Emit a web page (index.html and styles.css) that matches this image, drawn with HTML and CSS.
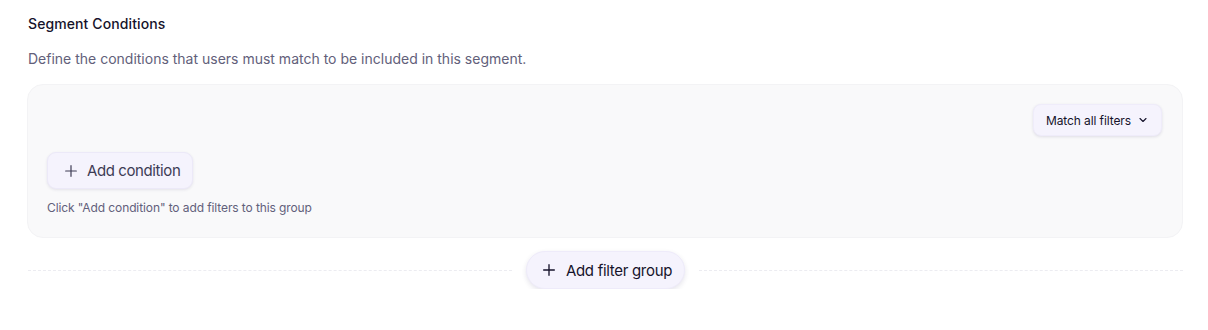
FILE: index.html
```html
<!DOCTYPE html>
<html lang="en">
<head>
    <meta charset="UTF-8">
    <meta name="viewport" content="width=device-width, initial-scale=1.0">
    <title>Segment Conditions</title>
    <link rel="stylesheet" href="styles.css">
</head>
<body>
    <section class="segment">
        <h2 class="segment-title">Segment Conditions</h2>
        <p class="segment-desc">Define the conditions that users must match to be included in this segment.</p>

        <div class="filter-group">
            <div class="group-head">
                <button class="match-btn">
                    Match all filters
                    <svg width="12" height="12" viewBox="0 0 24 24" fill="none" stroke="currentColor" stroke-width="2.2" stroke-linecap="round" stroke-linejoin="round"><path d="M6 9l6 6 6-6"/></svg>
                </button>
            </div>
            <button class="add-btn">
                <svg width="16" height="16" viewBox="0 0 24 24" fill="none" stroke="currentColor" stroke-width="1.8" stroke-linecap="round"><path d="M12 4v16M4 12h16"/></svg>
                Add condition
            </button>
            <p class="group-hint">Click "Add condition" to add filters to this group</p>
        </div>

        <div class="group-divider">
            <button class="add-group-btn">
                <svg width="16" height="16" viewBox="0 0 24 24" fill="none" stroke="currentColor" stroke-width="2" stroke-linecap="round"><path d="M12 4v16M4 12h16"/></svg>
                Add filter group
            </button>
        </div>
    </section>
</body>
</html>
```

FILE: styles.css
```css
:root {
    --ink: #16132b;
    --muted: #62607a;
    --lavender: #f5f3fd;
    --line: #ececf1;
}

* {
    margin: 0;
    padding: 0;
    box-sizing: border-box;
}

body {
    font-family: Inter, 'Noto Sans', sans-serif;
    background: #fff;
    color: var(--ink);
}

.segment {
    padding: 14px 25px 0 28px;
}

.segment-title {
    font-size: 14px;
    font-weight: 500;
    line-height: 20px;
    letter-spacing: 0.1px;
}

.segment-desc {
    margin-top: 15px;
    font-size: 14px;
    line-height: 20px;
    color: var(--muted);
}

.filter-group {
    margin: 15px 0 0 -1px;
    background: #f9f9fa;
    border: 1px solid #f3f3f5;
    border-radius: 16px;
    padding: 19px 20px 21px 19px;
}

.group-head {
    display: flex;
    justify-content: flex-end;
}

.match-btn {
    display: inline-flex;
    align-items: center;
    gap: 6px;
    height: 32px;
    padding: 0 12px;
    font-family: inherit;
    font-size: 12px;
    letter-spacing: -0.1px;
    color: var(--ink);
    background: var(--lavender);
    border: 1px solid #efecfa;
    border-radius: 8px;
    box-shadow: 0 1px 3px rgba(40, 30, 90, 0.12);
}

.add-btn {
    margin-top: 16px;
    display: inline-flex;
    align-items: center;
    gap: 8px;
    height: 37px;
    padding: 0 12px 0 15px;
    font-family: inherit;
    font-size: 15px;
    letter-spacing: -0.4px;
    color: #3e3c55;
    background: var(--lavender);
    border: 1px solid #ece9f8;
    border-radius: 9px;
    box-shadow: 0 1px 3px rgba(40, 30, 90, 0.1);
}

.group-hint {
    margin-top: 11px;
    font-size: 12px;
    line-height: 16px;
    color: var(--muted);
    letter-spacing: -0.1px;
}

.group-divider {
    margin-top: 13px;
    display: flex;
    align-items: center;
    justify-content: center;
    gap: 14px;
}

.group-divider::before,
.group-divider::after {
    content: '';
    flex: 1;
    border-top: 1px dashed var(--line);
}

.add-group-btn {
    display: inline-flex;
    align-items: center;
    gap: 9px;
    height: 38px;
    padding: 0 12px 0 14px;
    font-family: inherit;
    font-size: 15px;
    letter-spacing: -0.3px;
    color: var(--ink);
    background: var(--lavender);
    border: 1px solid #eeebfa;
    border-radius: 19px;
    box-shadow: 0 2px 5px rgba(40, 30, 90, 0.12);
}
```
